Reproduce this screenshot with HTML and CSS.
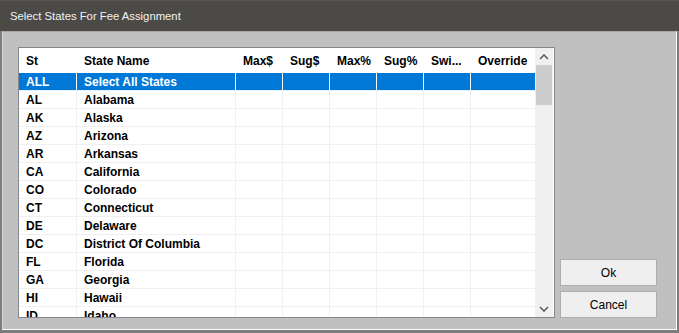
FILE: index.html
```html
<!DOCTYPE html>
<html>
<head>
<meta charset="utf-8">
<link rel="stylesheet" href="styles.css">
</head>
<body>
<div class="window">
  <div class="titlebar">Select States For Fee Assignment</div>
  <div class="frame">
    <div class="client">
      <div class="listbox">
        <div class="grid">
          <div class="row header">
            <div class="cell">St</div><div class="cell">State Name</div><div class="cell">Max$</div><div class="cell">Sug$</div><div class="cell">Max%</div><div class="cell">Sug%</div><div class="cell">Swi...</div><div class="cell">Override</div>
          </div>
          <div class="rows">
            <div class="row selected"><div class="cell">ALL</div><div class="cell">Select All States</div><div class="cell"></div><div class="cell"></div><div class="cell"></div><div class="cell"></div><div class="cell"></div><div class="cell"></div></div>
            <div class="row"><div class="cell">AL</div><div class="cell">Alabama</div><div class="cell"></div><div class="cell"></div><div class="cell"></div><div class="cell"></div><div class="cell"></div><div class="cell"></div></div>
            <div class="row"><div class="cell">AK</div><div class="cell">Alaska</div><div class="cell"></div><div class="cell"></div><div class="cell"></div><div class="cell"></div><div class="cell"></div><div class="cell"></div></div>
            <div class="row"><div class="cell">AZ</div><div class="cell">Arizona</div><div class="cell"></div><div class="cell"></div><div class="cell"></div><div class="cell"></div><div class="cell"></div><div class="cell"></div></div>
            <div class="row"><div class="cell">AR</div><div class="cell">Arkansas</div><div class="cell"></div><div class="cell"></div><div class="cell"></div><div class="cell"></div><div class="cell"></div><div class="cell"></div></div>
            <div class="row"><div class="cell">CA</div><div class="cell">California</div><div class="cell"></div><div class="cell"></div><div class="cell"></div><div class="cell"></div><div class="cell"></div><div class="cell"></div></div>
            <div class="row"><div class="cell">CO</div><div class="cell">Colorado</div><div class="cell"></div><div class="cell"></div><div class="cell"></div><div class="cell"></div><div class="cell"></div><div class="cell"></div></div>
            <div class="row"><div class="cell">CT</div><div class="cell">Connecticut</div><div class="cell"></div><div class="cell"></div><div class="cell"></div><div class="cell"></div><div class="cell"></div><div class="cell"></div></div>
            <div class="row"><div class="cell">DE</div><div class="cell">Delaware</div><div class="cell"></div><div class="cell"></div><div class="cell"></div><div class="cell"></div><div class="cell"></div><div class="cell"></div></div>
            <div class="row"><div class="cell">DC</div><div class="cell">District Of Columbia</div><div class="cell"></div><div class="cell"></div><div class="cell"></div><div class="cell"></div><div class="cell"></div><div class="cell"></div></div>
            <div class="row"><div class="cell">FL</div><div class="cell">Florida</div><div class="cell"></div><div class="cell"></div><div class="cell"></div><div class="cell"></div><div class="cell"></div><div class="cell"></div></div>
            <div class="row"><div class="cell">GA</div><div class="cell">Georgia</div><div class="cell"></div><div class="cell"></div><div class="cell"></div><div class="cell"></div><div class="cell"></div><div class="cell"></div></div>
            <div class="row"><div class="cell">HI</div><div class="cell">Hawaii</div><div class="cell"></div><div class="cell"></div><div class="cell"></div><div class="cell"></div><div class="cell"></div><div class="cell"></div></div>
            <div class="row"><div class="cell">ID</div><div class="cell">Idaho</div><div class="cell"></div><div class="cell"></div><div class="cell"></div><div class="cell"></div><div class="cell"></div><div class="cell"></div></div>
          </div>
        </div>
        <div class="scrollbar">
          <div class="arrow">
            <svg width="10" height="6" viewBox="0 0 10 6"><path d="M1 5 L5 1 L9 5" fill="none" stroke="#606060" stroke-width="1.6"/></svg>
          </div>
          <div class="track"><div class="thumb"></div></div>
          <div class="arrow">
            <svg width="10" height="6" viewBox="0 0 10 6"><path d="M1 1 L5 5 L9 1" fill="none" stroke="#606060" stroke-width="1.6"/></svg>
          </div>
        </div>
      </div>
      <div class="buttons">
        <button class="btn">Ok</button>
        <button class="btn">Cancel</button>
      </div>
    </div>
  </div>
</div>
</body>
</html>
```
FILE: styles.css
```css
html, body {
  margin: 0;
  padding: 0;
}
body {
  width: 679px;
  height: 333px;
  overflow: hidden;
  background: #c0c0c0;
}
.window {
  width: 679px;
  height: 333px;
  display: flex;
  flex-direction: column;
}
.titlebar {
  height: 30px;
  background: #4b4a47;
  border-top: 1px solid #57564f;
  color: #f2f2f2;
  font-family: "Liberation Sans", Arial, sans-serif;
  font-size: 11.3px;
  line-height: 31px;
  padding-left: 10px;
  flex: none;
}
.frame {
  flex: 1;
  display: flex;
  background: #7c7c7c;
  padding: 0 2px 3px 2px;
  min-height: 0;
}
.client {
  flex: 1;
  display: flex;
  align-items: flex-end;
  background: #c0c0c0;
  border-top: 1px solid #a8a8a8;
  border-left: 1px solid #d8d8d8;
  border-right: 1px solid #ffffff;
  border-bottom: 1px solid #ffffff;
  padding: 15px 0 11px 15px;
  gap: 5px;
}
.listbox {
  width: 535px;
  height: 269px;
  border: 1px solid #828790;
  background: #fff;
  display: flex;
  overflow: hidden;
  flex: none;
}
.grid {
  width: 516px;
  display: flex;
  flex-direction: column;
  overflow: hidden;
  font-family: "Liberation Sans", Arial, sans-serif;
  font-weight: bold;
  font-size: 12px;
  color: #000;
}
.row {
  display: grid;
  grid-template-columns: 58px 159px 47px 47px 47px 47px 47px 64px;
  height: 18px;
  flex: none;
}
.row .cell {
  padding-left: 7px;
  line-height: 18px;
  border-right: 1px solid #f0f0f0;
  border-bottom: 1px solid #f0f0f0;
  white-space: nowrap;
  overflow: hidden;
}
.row .cell:last-child {
  border-right: none;
}
.row.header {
  height: 25px;
}
.row.header .cell {
  line-height: 26px;
  border-bottom: none;
  border-right: none;
  position: relative;
}
.row.header .cell + .cell::before {
  content: "";
  position: absolute;
  left: -1px;
  top: 2px;
  bottom: 1px;
  width: 1px;
  background: #e5e5e5;
}
.rows {
  display: flex;
  flex-direction: column;
}
.row.selected {
  background: #0078d7;
  color: #fff;
}
.row.selected .cell {
  border-right-color: #ffffff;
  border-bottom-color: #e9f1fa;
}
.scrollbar {
  width: 18px;
  background: #f0f0f0;
  display: flex;
  flex-direction: column;
}
.arrow {
  height: 17px;
  display: flex;
  align-items: center;
  justify-content: center;
  flex: none;
}
.track {
  flex: 1;
  padding: 0 1px 0 1px;
}
.thumb {
  height: 40px;
  background: #cdcdcd;
}
.buttons {
  display: flex;
  flex-direction: column;
  gap: 5px;
}
.btn {
  width: 97px;
  height: 27px;
  background: #efefef;
  border: 1px solid #adadad;
  font-family: "Liberation Sans", Arial, sans-serif;
  font-size: 12px;
  color: #000;
  padding: 0;
  margin: 0;
}
```
